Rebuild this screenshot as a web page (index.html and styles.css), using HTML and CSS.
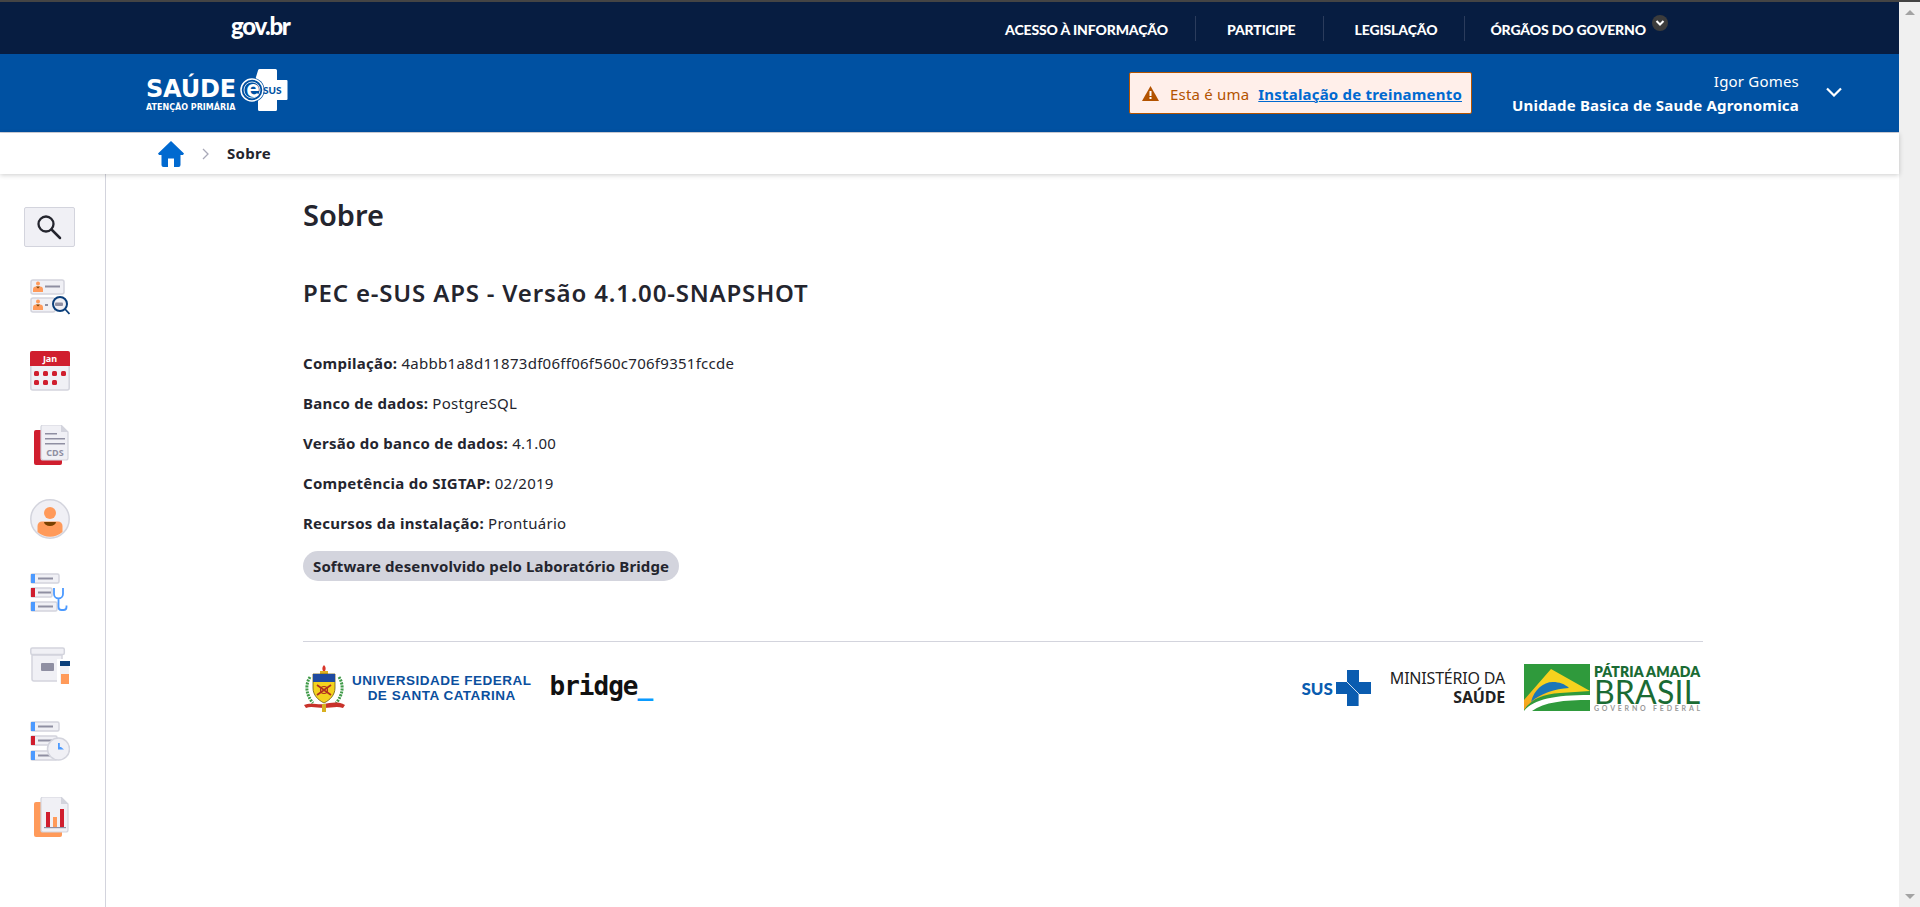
FILE: index.html
```html
<!doctype html>
<html lang="pt-BR">
<head>
	<meta charset="UTF-8">
	<title>Sobre</title>
	<link rel="stylesheet" href="styles.css">
</head>
<body>
	<div class="app">
		<div class="main">
			<div class="gov_bar">
				<span class="gov_logo">gov.br</span>
				<ul class="gov_nav">
					<li>ACESSO À INFORMAÇÃO</li>
					<li>PARTICIPE</li>
					<li>LEGISLAÇÃO</li>
					<li class="gov_more">ÓRGÃOS DO GOVERNO
						<span class="more_dot">
							<svg width="10" height="10" viewBox="0 0 10 10"><path d="M1.5 3l3.5 3.5L8.5 3" fill="none" stroke="#fff" stroke-width="2"/></svg>
						</span>
					</li>
				</ul>
			</div>
			<div class="top_bar">
				<div class="app_logo">
					<div class="app_logo_txt">
						<span class="logo_big">SAÚDE</span>
						<span class="logo_small">ATENÇÃO PRIMÁRIA</span>
					</div>
					<svg class="logo_mark" width="48" height="42" viewBox="0 0 48 42">
						<path d="M18 1.500a1.500 1.500 0 0 1 1.500-1.500h16a1.500 1.500 0 0 1 1.500 1.500V11h9.500a1 1 0 0 1 1 1v18a1 1 0 0 1-1 1H37v9.500a1.500 1.500 0 0 1-1.500 1.500h-16a1.500 1.500 0 0 1-1.500-1.500V31L12 21z" fill="#fff"/>
						<circle cx="12" cy="21" r="12.500" fill="#0051a2"/>
						<circle cx="12" cy="21" r="11" fill="none" stroke="#fff" stroke-width="1.500"/>
						<circle cx="12" cy="21" r="8" fill="none" stroke="#fff" stroke-width="0.800"/>
						<text x="13" y="28" text-anchor="middle" class="mark_e">e</text>
						<text x="23" y="25" class="mark_sus">SUS</text>
					</svg>
				</div>
				<div class="alert">
					<svg width="17" height="15" viewBox="0 0 17 15"><path d="M8.500 0L17 15H0z" fill="#b35300"/><path d="M7.500 5h2v5h-2zM7.500 11h2v2h-2z" fill="#fff"/></svg>
					<span class="alert_txt">Esta é uma</span>
					<a class="alert_link">Instalação de treinamento</a>
				</div>
				<div class="user">
					<span class="user_name">Igor Gomes</span>
					<strong>Unidade Basica de Saude Agronomica</strong>
				</div>
				<svg class="user_arrow" width="16" height="10" viewBox="0 0 16 10"><path d="M1 1.500l7 7 7-7" fill="none" stroke="#fff" stroke-width="2.200"/></svg>
			</div>
			<div class="crumbs">
				<svg width="26" height="26" viewBox="0 0 26 26"><path d="M13 0L0 12.500 1 14h2.500v10a2 2 0 0 0 2 2h4.500v-8.500h6V26h4.500a2 2 0 0 0 2-2V14H25l1-1.500z" fill="#0069d0"/></svg>
				<svg class="crumb_sep" width="7" height="12" viewBox="0 0 7 12"><path d="M1 1l5 5-5 5" fill="none" stroke="#a9a9b8" stroke-width="1.300"/></svg>
				<b>Sobre</b>
			</div>
			<div class="body_wrap">
				<div class="side">
					<div class="search_btn">
						<svg width="28" height="28" viewBox="0 0 28 28"><circle cx="11" cy="11" r="7.500" fill="none" stroke="#24252e" stroke-width="2.300"/><path d="M16.500 16.500L25 25" stroke="#24252e" stroke-width="2.500" stroke-linecap="round"/></svg>
					</div>
					<!-- lista de cidadaos -->
					<svg class="side_ico" width="40" height="40" viewBox="0 0 40 40">
						<rect x="1" y="3" width="33" height="14" rx="2" fill="#f0f0f5" stroke="#d3d4dd" stroke-width="1.500"/>
						<circle cx="8" cy="6.500" r="2" fill="#ff9a5a"/><path d="M3 15v-2.500a3 3 0 0 1 3-3h4a3 3 0 0 1 3 3V15z" fill="#ff9a5a"/><path d="M6 9.500h4L8 11.500z" fill="#7a4100"/>
						<rect x="15" y="8.500" width="15" height="2" fill="#8f8fa2"/>
						<rect x="1" y="21" width="24" height="14" rx="2" fill="#f0f0f5" stroke="#d3d4dd" stroke-width="1.500"/>
						<circle cx="8" cy="24.500" r="2" fill="#ff9a5a"/><path d="M3 33v-2.500a3 3 0 0 1 3-3h4a3 3 0 0 1 3 3V33z" fill="#ff9a5a"/><path d="M6 27.500h4L8 29.500z" fill="#7a4100"/>
						<rect x="15" y="27" width="3" height="2" fill="#8f8fa2"/>
						<circle cx="30" cy="27" r="7" fill="#f0f0f5" stroke="#0a3e7a" stroke-width="2"/>
						<rect x="25" y="25.500" width="8" height="3.500" rx="1" fill="#8f8fa2"/>
						<path d="M35 32l4.500 5" stroke="#0a3e7a" stroke-width="1.800"/>
					</svg>
					<!-- agenda -->
					<svg class="side_ico" width="40" height="40" viewBox="0 0 40 40">
						<path d="M0.800 13h38.400v24a2 2 0 0 1-2 2H2.800a2 2 0 0 1-2-2z" fill="#f0f0f5" stroke="#d3d4dd" stroke-width="1.500"/>
						<path d="M0 2a2 2 0 0 1 2-2h36a2 2 0 0 1 2 2v13H0z" fill="#d01e2e"/>
						<text x="20" y="11" text-anchor="middle" class="cal_txt">Jan</text>
						<g fill="#d01e2e"><rect x="4" y="20" width="5" height="5" rx="1.500"/><rect x="13" y="20" width="5" height="5" rx="1.500"/><rect x="22" y="20" width="5" height="5" rx="1.500"/><rect x="31" y="20" width="5" height="5" rx="1.500"/><rect x="4" y="29" width="5" height="5" rx="1.500"/><rect x="13" y="29" width="5" height="5" rx="1.500"/><rect x="22" y="29" width="5" height="5" rx="1.500"/></g>
					</svg>
					<!-- cds -->
					<svg class="side_ico" width="40" height="40" viewBox="0 0 40 40">
						<rect x="4" y="5" width="28" height="35" rx="2" fill="#d01e2e"/>
						<path d="M11 2a2 2 0 0 1 2-2h18l7 7v26a2 2 0 0 1-2 2H13a2 2 0 0 1-2-2z" fill="#f0f0f5" stroke="#d3d4dd" stroke-width="1.200"/>
						<path d="M31 0v7h7z" fill="#d3d4dd"/>
						<path d="M15 8h12v1.500H15zM15 13h20v1.500H15zM15 18h20v1.500H15z" fill="#8f8fa2"/>
						<text x="25" y="31" text-anchor="middle" class="cds_txt">CDS</text>
					</svg>
					<!-- cidadao -->
					<svg class="side_ico" width="40" height="40" viewBox="0 0 40 40">
						<circle cx="20" cy="20" r="19.200" fill="#f0f0f5" stroke="#d3d4dd" stroke-width="1.500"/>
						<circle cx="20" cy="14" r="6" fill="#ff9a5a"/>
						<path d="M7.500 33v-6a4.500 4.500 0 0 1 4.500-4.500h16a4.500 4.500 0 0 1 4.500 4.500v6a19 19 0 0 1-25 0z" fill="#ff9a5a"/>
						<path d="M14 23h12a6 4 0 0 1-12 0z" fill="#7a4100"/>
					</svg>
					<!-- atendimentos -->
					<svg class="side_ico" width="40" height="40" viewBox="0 0 40 40">
						<rect x="1" y="1" width="28" height="9" rx="1.500" fill="#f0f0f5" stroke="#d3d4dd" stroke-width="1.500"/><rect x="1" y="1" width="4" height="9" fill="#4c9aff"/><rect x="8" y="4.500" width="15" height="2" fill="#8f8fa2"/>
						<rect x="1" y="15" width="21" height="9" rx="1.500" fill="#f0f0f5" stroke="#d3d4dd" stroke-width="1.500"/><rect x="1" y="15" width="4" height="9" fill="#d01e2e"/><rect x="8" y="18.500" width="13" height="2" fill="#8f8fa2"/>
						<rect x="1" y="29" width="26" height="9" rx="1.500" fill="#f0f0f5" stroke="#d3d4dd" stroke-width="1.500"/><rect x="1" y="29" width="4" height="9" fill="#4c9aff"/><rect x="8" y="32.500" width="15" height="2" fill="#8f8fa2"/>
						<path d="M24 15v6a4.500 4.500 0 0 0 9 0v-6M28.500 26v8a3 3 0 0 0 3 3h2a3 3 0 0 0 3-3v-1.500" fill="none" stroke="#4c9aff" stroke-width="1.800"/>
					</svg>
					<!-- almoxarifado -->
					<svg class="side_ico" width="40" height="40" viewBox="0 0 40 40">
						<path d="M2 8h30v24a2 2 0 0 1-2 2H4a2 2 0 0 1-2-2z" fill="#f0f0f5" stroke="#d3d4dd" stroke-width="1.500"/>
						<rect x="0.800" y="1" width="33.500" height="6.500" rx="1.500" fill="#f0f0f5" stroke="#d3d4dd" stroke-width="1.500"/>
						<rect x="11" y="16" width="13" height="8" rx="1" fill="#8f8fa2"/>
						<rect x="27" y="12" width="13" height="26" fill="#fff"/>
						<rect x="30" y="19" width="9" height="18" rx="1" fill="#f0f0f5"/>
						<rect x="31" y="27" width="8" height="10" fill="#ff9a5a"/>
						<rect x="30" y="14" width="10" height="5" fill="#0a3e7a"/>
					</svg>
					<!-- historico -->
					<svg class="side_ico" width="40" height="42" viewBox="0 0 40 42">
						<rect x="1" y="1" width="28" height="9" rx="1.500" fill="#f0f0f5" stroke="#d3d4dd" stroke-width="1.500"/><rect x="1" y="1" width="4" height="9" fill="#4c9aff"/><rect x="8" y="4.500" width="15" height="2" fill="#8f8fa2"/>
						<rect x="1" y="15" width="26" height="9" rx="1.500" fill="#f0f0f5" stroke="#d3d4dd" stroke-width="1.500"/><rect x="1" y="15" width="4" height="9" fill="#d01e2e"/><rect x="8" y="18.500" width="15" height="2" fill="#8f8fa2"/>
						<rect x="1" y="30" width="26" height="9" rx="1.500" fill="#f0f0f5" stroke="#d3d4dd" stroke-width="1.500"/><rect x="1" y="30" width="4" height="9" fill="#4c9aff"/><rect x="8" y="33.500" width="15" height="2" fill="#8f8fa2"/>
						<circle cx="28.500" cy="28" r="11" fill="#f0f0f5" stroke="#d3d4dd" stroke-width="1.500"/>
						<path d="M28 22v6.500h6l-3-2.500h-1.200V22z" fill="#4c9aff"/>
					</svg>
					<!-- relatorios -->
					<svg class="side_ico" width="40" height="40" viewBox="0 0 40 40">
						<rect x="4" y="5" width="28" height="35" rx="2" fill="#ff9a5a"/>
						<path d="M11 2a2 2 0 0 1 2-2h18l7 7v26a2 2 0 0 1-2 2H13a2 2 0 0 1-2-2z" fill="#f0f0f5" stroke="#d3d4dd" stroke-width="1.200"/>
						<path d="M31 0v7h7z" fill="#d3d4dd"/>
						<rect x="16" y="15" width="4" height="15" fill="#d01e2e"/><rect x="23" y="20" width="4" height="10" fill="#ff9a5a"/><rect x="30" y="12" width="4" height="18" fill="#d01e2e"/>
						<rect x="14" y="30" width="22" height="1.200" fill="#8f8fa2"/>
					</svg>
				</div>
				<div class="content">
					<h1>Sobre</h1>
					<h2>PEC e-SUS APS - Versão 4.1.00-SNAPSHOT</h2>
					<ul class="infos">
						<li><b>Compilação:</b> 4abbb1a8d11873df06ff06f560c706f9351fccde</li>
						<li><b>Banco de dados:</b> PostgreSQL</li>
						<li><b>Versão do banco de dados:</b> 4.1.00</li>
						<li><b>Competência do SIGTAP:</b> 02/2019</li>
						<li><b>Recursos da instalação:</b> Prontuário</li>
					</ul>
					<span class="chip">Software desenvolvido pelo Laboratório Bridge</span>
					<div class="logos">
						<div class="logos_left">
							<svg width="44" height="50" viewBox="0 0 44 50">
								<path d="M21 2c2 2 2 4 1 6h-2c-1-2-1-4 1-6z" fill="#d8352a"/>
								<rect x="17" y="8" width="8" height="3" fill="#e0b020"/>
								<path d="M10 11h22v14c0 7-5 12-11 15-6-3-11-8-11-15z" fill="#f4d21f" stroke="#6b5a10" stroke-width="0.800"/>
								<rect x="10" y="11" width="22" height="8" fill="#1f4aa0"/>
								<path d="M14 22l14 10M28 22L14 32" stroke="#b03020" stroke-width="1.800"/>
								<circle cx="21" cy="27" r="3.500" fill="none" stroke="#b03020" stroke-width="1.200"/>
								<path d="M7 14c-5 8-4 18 3 26M36 14c5 8 4 18-3 26" fill="none" stroke="#3f9a48" stroke-width="3" stroke-dasharray="2 1"/>
								<path d="M1 42c6-3 14 0 20-1s14-3 21 1l-2 3c-6-2-12 0-19 0s-13-2-18 0z" fill="#c8322a"/>
								<rect x="19" y="41" width="4" height="8" fill="#d8b020"/>
							</svg>
							<div class="ufsc">UNIVERSIDADE FEDERAL<br>DE SANTA CATARINA</div>
							<div class="bridge">bridge<i>_</i></div>
						</div>
						<div class="logos_right">
							<div class="sus">
								<span>SUS</span>
								<svg width="35" height="36" viewBox="0 0 35 36"><path d="M11 0h12v12h12v12H23v12H11V24H0V12h11z" fill="#0a5cb0"/><path d="M11 12l12 12v12" fill="none" stroke="#fff" stroke-width="0.800"/></svg>
							</div>
							<div class="min_saude">MINISTÉRIO DA<br><b>SAÚDE</b></div>
							<div class="brasil">
								<svg width="66" height="47" viewBox="0 0 66 47">
									<defs>
										<linearGradient id="flagSun" x1="0" y1="1" x2="0.600" y2="0">
											<stop offset="0" stop-color="#f59a1e"/>
											<stop offset="0.600" stop-color="#f7d21e"/>
										</linearGradient>
									</defs>
									<rect width="66" height="47" fill="#2f9a3c"/>
									<path d="M0 36L27 5l39 22-30 2C20 30 8 34 0 46z" fill="url(#flagSun)"/>
									<path d="M7 38c3-12 12-20 22-20 6 0 12 2 16 6-14 1-28 5-38 14z" fill="#1c76b8"/>
									<path d="M0 47c10-12 30-16 66-16v5C40 36 20 38 8 47z" fill="#fff"/>
								</svg>
								<div class="brasil_txt">
									<span class="b_top">PÁTRIA AMADA</span>
									<span class="b_mid">BRASIL</span>
									<span class="b_bot">GOVERNO FEDERAL</span>
								</div>
							</div>
						</div>
					</div>
				</div>
			</div>
		</div>
		<div class="scroll_col">
			<span class="scroll_up"></span>
			<span class="scroll_down"></span>
		</div>
	</div>
</body>
</html>
```

FILE: styles.css
```css
*{
	margin: 0;
	padding: 0;
	box-sizing: border-box;
	list-style-type: none;
}
body{
	background: #fff;
	font-family: "Noto Sans", "Open Sans", sans-serif;
	color: #24252e;
	overflow: hidden;
	border-top: 2px solid #444;
}
.app{
	display: flex;
	height: 905px;
}
.main{
	flex: 1;
	display: flex;
	flex-direction: column;
	min-width: 0;
}
.scroll_col{
	width: 21px;
	background: #f0f0f0;
	display: flex;
	flex-direction: column;
	justify-content: space-between;
	align-items: center;
	padding: 8px 0;
}
.scroll_up{
	border: 5px solid transparent;
	border-top: 0;
	border-bottom: 5px solid #a3a3a3;
}
.scroll_down{
	border: 5px solid transparent;
	border-bottom: 0;
	border-top: 5px solid #a3a3a3;
}

/* faixa do governo */
.gov_bar{
	height: 52px;
	background: #071d41;
	color: #fff;
	display: flex;
	align-items: center;
	justify-content: space-between;
	padding: 0 231px 0 231px;
}
.gov_logo{
	font-family: "Lato", sans-serif;
	font-weight: 900;
	font-size: 24px;
	letter-spacing: -1.300px;
	margin-top: -6px;
}
.gov_nav{
	display: flex;
	align-items: center;
	font-family: "Lato", sans-serif;
	font-weight: 900;
	font-size: 14px;
	letter-spacing: -0.130px;
}
.gov_nav li{
	height: 25px;
	line-height: 27px;
	padding: 0 27px 0 31px;
	border-right: 1px solid #2b3c5c;
	white-space: nowrap;
}
.gov_nav .gov_more{
	border-right: 0;
	padding: 0 0 0 25px;
	display: flex;
}
.more_dot{
	width: 16px;
	height: 16px;
	background: #3c3c3c;
	border-radius: 50%;
	margin: -1px 0 0 6px;
	display: flex;
	align-items: center;
	justify-content: center;
}

/* barra azul */
.top_bar{
	height: 79px;
	background: #0051a2;
	border-bottom: 1px solid #d3d4dd;
	color: #fff;
	display: flex;
	align-items: center;
	padding: 0 57px 0 146px;
}
.app_logo{
	display: flex;
	align-items: center;
	margin-right: auto;
}
.app_logo_txt{
	display: flex;
	flex-direction: column;
	font-family: "DejaVu Sans", sans-serif;
	font-weight: 700;
	margin-top: 4px;
}
.logo_big{
	font-size: 24px;
	line-height: 25px;
	letter-spacing: -0.200px;
}
.logo_small{
	font-size: 8px;
	line-height: 12px;
	white-space: nowrap;
}
.logo_mark{
	margin: -6px 0 0 4px;
}
.mark_e{
	font: 900 24px "Lato", sans-serif;
	fill: #fff;
}
.mark_sus{
	font: 900 10px "Lato", sans-serif;
	fill: #0051a2;
}
.alert{
	width: 343px;
	height: 42px;
	background: #ffefea;
	border: 1px solid #b35300;
	border-radius: 2px;
	display: flex;
	align-items: center;
	padding-left: 12px;
	font-size: 15px;
	line-height: 20px;
	letter-spacing: 0.200px;
	white-space: nowrap;
}
.alert_txt{
	color: #b35300;
	margin: 2px 9px 0 11px;
}
.alert_link{
	color: #0069d0;
	font-weight: 700;
	text-decoration: underline;
	margin-top: 2px;
}
.user{
	margin-left: 40px;
	text-align: right;
	display: flex;
	flex-direction: column;
	font-size: 15px;
	letter-spacing: 0.200px;
	line-height: 24px;
	white-space: nowrap;
}
.user_arrow{
	margin-left: 27px;
	margin-top: -2px;
}

/* migalha */
.crumbs{
	height: 41px;
	display: flex;
	align-items: center;
	padding-left: 158px;
	font-size: 15px;
	letter-spacing: 0.300px;
	box-shadow: 0 1px 5px rgba(0,0,0,0.2);
	position: relative;
}
.crumbs b{
	margin-bottom: 2px;
}
.crumb_sep{
	margin: 0 18px 0 18px;
}

.body_wrap{
	flex: 1;
	display: flex;
	min-height: 0;
}
.side{
	width: 106px;
	border-right: 1px solid #d3d4dd;
	display: flex;
	flex-direction: column;
	align-items: center;
	padding: 33px 5px 0 0;
	gap: 34px;
	flex-shrink: 0;
}
.search_btn{
	width: 51px;
	height: 40px;
	background: #f0f0f5;
	border: 1px solid #d3d4dd;
	border-radius: 2px;
	display: flex;
	align-items: center;
	justify-content: center;
	margin: 0 0 -4px -2px;
}
.side_ico{
	display: block;
	flex-shrink: 0;
}
.cal_txt{
	font: 700 9px "Noto Sans", sans-serif;
	fill: #fff;
}
.cds_txt{
	font: 700 9px "Noto Sans", sans-serif;
	fill: #8f8fa2;
}

/* conteudo */
.content{
	flex: 1;
	padding: 22px 196px 0 197px;
}
h1{
	font-size: 29px;
	line-height: 38px;
	font-weight: 600;
}
h2{
	font-size: 24px;
	line-height: 28px;
	font-weight: 600;
	letter-spacing: 0.820px;
	margin-top: 45px;
}
.infos{
	margin-top: 46px;
	font-size: 15px;
	letter-spacing: 0.270px;
	line-height: 20px;
	display: flex;
	flex-direction: column;
	gap: 20px;
}
.infos b{
	font-weight: 700;
}
.chip{
	display: inline-block;
	margin-top: 18px;
	height: 30px;
	line-height: 31px;
	padding: 0 10px;
	background: #d3d4dd;
	border-radius: 15px;
	font-size: 15px;
	letter-spacing: 0.110px;
	font-weight: 700;
}
.logos{
	margin-top: 60px;
	border-top: 1px solid #d3d4dd;
	padding-top: 21px;
	display: flex;
	justify-content: space-between;
	align-items: center;
}
.logos_left, .logos_right{
	display: flex;
	align-items: center;
}
.ufsc{
	margin-left: 5px;
	font-family: "Liberation Sans", sans-serif;
	font-weight: 700;
	font-size: 13.500px;
	letter-spacing: 0.500px;
	line-height: 15px;
	text-align: center;
	color: #0b4f9e;
	white-space: nowrap;
}
.bridge{
	margin: -4px 0 0 18px;
	font-family: "DejaVu Sans Mono", monospace;
	font-weight: 700;
	font-size: 26px;
	letter-spacing: -1px;
	color: #111;
}
.bridge i{
	color: #0a9bff;
	font-style: normal;
}
.sus{
	display: flex;
	align-items: center;
	color: #0a5cb0;
	font: 900 17px "Lato", sans-serif;
	gap: 3px;
}
.min_saude{
	margin-left: 19px;
	text-align: right;
	font-size: 16px;
	letter-spacing: -0.200px;
	line-height: 19px;
	color: #222;
}
.brasil{
	display: flex;
	margin-left: 19px;
}
.brasil_txt{
	margin-left: 4px;
	display: flex;
	flex-direction: column;
	font-family: "Lato", sans-serif;
	color: #1a6b34;
	white-space: nowrap;
}
.b_top{
	font-size: 14px;
	line-height: 15px;
	letter-spacing: 0.100px;
	font-weight: 800;
}
.b_mid{
	font-size: 32px;
	line-height: 25px;
	font-weight: 400;
	letter-spacing: 0.200px;
}
.b_bot{
	font-size: 7px;
	line-height: 9px;
	letter-spacing: 2.800px;
	color: #999;
	font-weight: 700;
}
```
